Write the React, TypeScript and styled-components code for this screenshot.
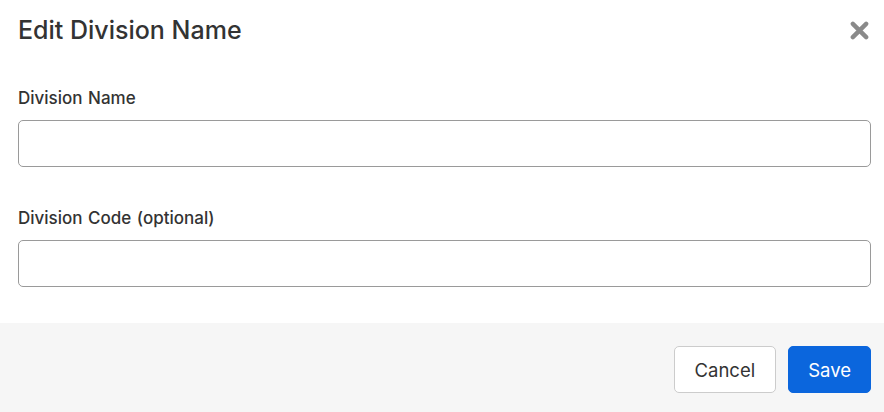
import styled, { createGlobalStyle } from 'styled-components';

const GlobalStyle = createGlobalStyle`
  html, body {
    margin: 0;
    padding: 0;
    background: #ffffff;
  }
  body {
    font-family: Inter, "Liberation Sans", Arial, sans-serif;
    color: #333333;
  }
`;

const Modal = styled.div`
  width: 884px;
  height: 412px;
  display: flex;
  flex-direction: column;
  background: #fff;
`;

const Header = styled.div`
  display: flex;
  align-items: center;
  justify-content: space-between;
  padding: 13px 14px 0 18px;
  height: 34px;
`;

const Title = styled.h2`
  margin: 0;
  font-size: 25px;
  font-weight: 500;
  color: #333;
`;

const CloseButton = styled.button`
  border: none;
  background: none;
  padding: 0;
  width: 22px;
  height: 22px;
  display: flex;
  align-items: center;
  justify-content: center;
  cursor: pointer;
`;

const Body = styled.div`
  flex: 1;
  display: flex;
  flex-direction: column;
  gap: 41px;
  padding: 41px 13px 0 18px;
`;

const Field = styled.div`
  display: flex;
  flex-direction: column;
  gap: 12px;
`;

const Label = styled.label`
  font-size: 17px;
  font-weight: 500;
  color: #333;
  line-height: 20px;
  word-spacing: 1px;
`;

const Input = styled.input`
  box-sizing: border-box;
  height: 47px;
  width: 100%;
  border: 1px solid #9a9a9a;
  border-radius: 5px;
  padding: 0 12px;
  font-size: 16px;
  font-family: inherit;
  outline: none;
`;

const Footer = styled.div`
  box-sizing: border-box;
  height: 89px;
  background: #f6f6f6;
  display: flex;
  justify-content: flex-end;
  align-items: center;
  gap: 12px;
  padding: 4px 13px 0 0;
`;

const Button = styled.button<{ $primary?: boolean }>`
  box-sizing: border-box;
  height: 47px;
  padding: 0 ${p => (p.$primary ? '19px' : '20px')};
  border-radius: 5px;
  font-family: inherit;
  font-size: 18.5px;
  cursor: pointer;
  border: 1px solid ${p => (p.$primary ? '#0b66dd' : '#cccccc')};
  background: ${p => (p.$primary ? '#0b66dd' : '#ffffff')};
  color: ${p => (p.$primary ? '#ffffff' : '#333333')};
`;

export default function App() {
  return (
    <>
      <GlobalStyle />
      <Modal>
        <Header>
          <Title>Edit Division Name</Title>
          <CloseButton aria-label="Close">
            <svg width="19" height="19" viewBox="0 0 20 20">
              <path d="M3 3 L17 17 M17 3 L3 17" stroke="#8a8a8a" strokeWidth="4.6" strokeLinecap="round" />
            </svg>
          </CloseButton>
        </Header>
        <Body>
          <Field>
            <Label>Division Name</Label>
            <Input />
          </Field>
          <Field>
            <Label>Division Code (optional)</Label>
            <Input />
          </Field>
        </Body>
        <Footer>
          <Button>Cancel</Button>
          <Button $primary>Save</Button>
        </Footer>
      </Modal>
    </>
  );
}
